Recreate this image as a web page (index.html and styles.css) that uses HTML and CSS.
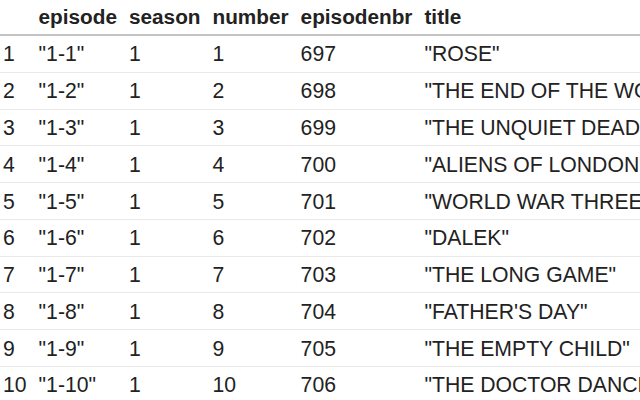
FILE: index.html
```html
<!DOCTYPE html>
<html>
<head>
<meta charset="utf-8">
<link rel="stylesheet" href="styles.css">
</head>
<body>
<table class="frame">
  <thead>
    <tr><th></th><th>episode</th><th>season</th><th>number</th><th>episodenbr</th><th>title</th></tr>
  </thead>
  <tbody>
    <tr><td>1</td><td>"1-1"</td><td>1</td><td>1</td><td>697</td><td>"ROSE"</td></tr>
    <tr><td>2</td><td>"1-2"</td><td>1</td><td>2</td><td>698</td><td>"THE END OF THE WORLD"</td></tr>
    <tr><td>3</td><td>"1-3"</td><td>1</td><td>3</td><td>699</td><td>"THE UNQUIET DEAD"</td></tr>
    <tr><td>4</td><td>"1-4"</td><td>1</td><td>4</td><td>700</td><td>"ALIENS OF LONDON"</td></tr>
    <tr><td>5</td><td>"1-5"</td><td>1</td><td>5</td><td>701</td><td>"WORLD WAR THREE"</td></tr>
    <tr><td>6</td><td>"1-6"</td><td>1</td><td>6</td><td>702</td><td>"DALEK"</td></tr>
    <tr><td>7</td><td>"1-7"</td><td>1</td><td>7</td><td>703</td><td>"THE LONG GAME"</td></tr>
    <tr><td>8</td><td>"1-8"</td><td>1</td><td>8</td><td>704</td><td>"FATHER'S DAY"</td></tr>
    <tr><td>9</td><td>"1-9"</td><td>1</td><td>9</td><td>705</td><td>"THE EMPTY CHILD"</td></tr>
    <tr><td>10</td><td>"1-10"</td><td>1</td><td>10</td><td>706</td><td>"THE DOCTOR DANCES"</td></tr>
  </tbody>
</table>
</body>
</html>
```
FILE: styles.css
```css
html, body {
  margin: 0;
  padding: 0;
  background: #fff;
  overflow: hidden;
}
.frame {
  border-collapse: collapse;
  font-family: "Liberation Sans", Arial, sans-serif;
  color: #222;
  white-space: nowrap;
}
.frame th, .frame td {
  text-align: left;
  padding: 0 6px;
}
.frame th {
  font-size: 20.75px;
  font-weight: bold;
  line-height: 26px;
  padding-top: 4px;
  padding-bottom: 4px;
  border-bottom: 2px solid #c4c4c4;
}
.frame td {
  font-size: 21.2px;
  line-height: 25px;
  padding-top: 5.4px;
  padding-bottom: 5.4px;
  border-top: 1px solid #e9e9e9;
}
.frame tbody tr:first-child td {
  border-top: none;
}
.frame td:first-child, .frame th:first-child {
  padding-left: 3px;
}
.frame th:last-child, .frame td:last-child {
  width: 400px;
}
```
